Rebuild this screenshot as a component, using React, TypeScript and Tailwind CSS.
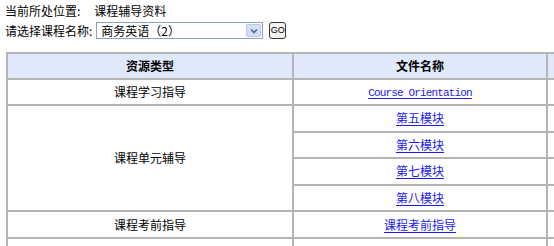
const cell = 'border border-[#b4b4b4] text-center align-middle';

const units = ['第五模块', '第六模块', '第七模块', '第八模块'];

function Link({ children, mono }: { children: string; mono?: boolean }) {
  return (
    <a
      href="#"
      className={`text-[#1a1aee] underline underline-offset-2 ${mono ? "font-['Liberation_Mono',monospace] text-[11px] tracking-[-0.85px]" : ''}`}
    >
      {children}
    </a>
  );
}

export default function App() {
  return (
    <div className="h-[246px] w-[554px] overflow-hidden bg-white font-['Noto_Sans_CJK_SC','Liberation_Sans',sans-serif] text-[12px] leading-none text-black">
      <div className="flex h-[18px] items-center pl-[5px] pt-[3px]">
        <span>当前所处位置:</span>
        <span className="ml-[14px]">课程辅导资料</span>
      </div>
      <div className="flex h-[22px] items-center pl-[5px] pt-[3px]">
        <span>请选择课程名称:</span>
        <div className="ml-[4px] flex h-[17px] w-[167px] items-center border border-[#8fa3b8] bg-white">
          <span className="flex-1 pl-[4px]">商务英语（2）</span>
          <span className="mr-[1px] flex h-[13px] w-[15px] items-center justify-center rounded-[2px] border border-[#b8c8ef] bg-[#d4e0fb]">
            <svg width="8" height="6" viewBox="0 0 8 6">
              <path d="M1 1.5 L4 4.5 L7 1.5" fill="none" stroke="#4d6185" strokeWidth="1.6" />
            </svg>
          </span>
        </div>
        <button className="ml-[6px] flex h-[17px] w-[17px] items-center justify-center rounded-[3px] border border-[#333] bg-[#f4f4f0] font-['Liberation_Sans',sans-serif] text-[9px]">
          GO
        </button>
      </div>

      <table className="ml-[6px] mt-[12px] w-[620px] table-fixed border-separate border-spacing-0 border border-[#b4b4b4]">
        <colgroup>
          <col className="w-[286px]" />
          <col className="w-[254px]" />
          <col />
        </colgroup>
        <thead>
          <tr className="h-[26px] bg-[#dfe9fb] font-bold">
            <th className={cell}>资源类型</th>
            <th className={cell}>文件名称</th>
            <th className={cell}></th>
          </tr>
        </thead>
        <tbody>
          <tr className="h-[26px]">
            <td className={cell}>课程学习指导</td>
            <td className={cell}>
              <Link mono>Course Orientation</Link>
            </td>
            <td className={cell}></td>
          </tr>
          {units.map((u, i) => (
            <tr key={u} className="h-[26.5px]">
              {i === 0 && (
                <td rowSpan={4} className={cell}>
                  课程单元辅导
                </td>
              )}
              <td className={cell}>
                <Link>{u}</Link>
              </td>
              <td className={cell}></td>
            </tr>
          ))}
          <tr className="h-[27px]">
            <td className={cell}>课程考前指导</td>
            <td className={cell}>
              <Link>课程考前指导</Link>
            </td>
            <td className={cell}></td>
          </tr>
          <tr className="h-[26px]">
            <td className={cell}></td>
            <td className={cell}></td>
            <td className={cell}></td>
          </tr>
        </tbody>
      </table>
    </div>
  );
}
